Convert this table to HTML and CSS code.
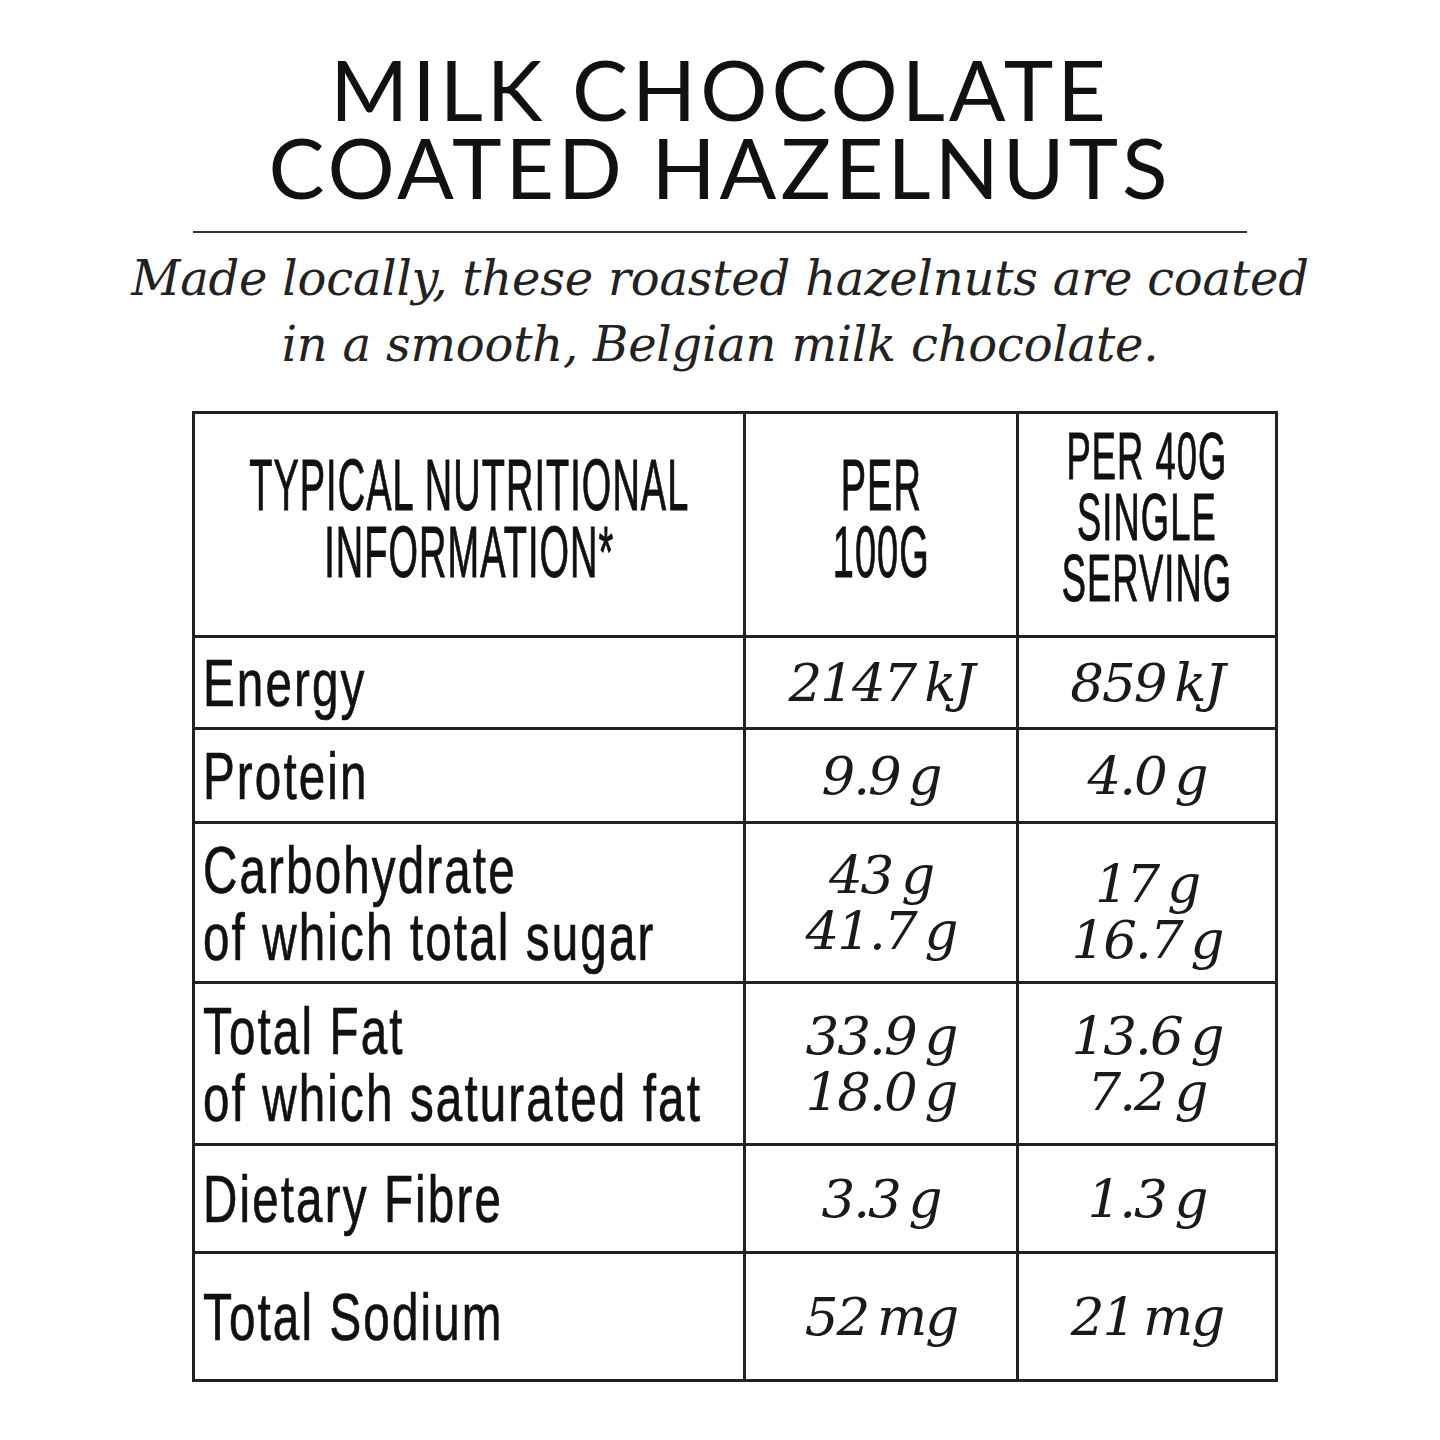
FILE: index.html
```html
<!DOCTYPE html>
<html lang="en">
<head>
<meta charset="utf-8">
<title>Milk Chocolate Coated Hazelnuts</title>
<link rel="stylesheet" href="styles.css">
</head>
<body>
<main class="page">
  <h1 class="title">MILK CHOCOLATE<br>COATED HAZELNUTS</h1>
  <hr class="rule">
  <p class="intro">Made locally, these roasted hazelnuts are coated<br>in a smooth, Belgian milk chocolate.</p>
  <table class="nutrition">
    <colgroup><col class="c1"><col class="c2"><col class="c3"></colgroup>
    <thead>
      <tr class="r-head">
        <th class="head"><div class="head-wrap"><span class="cond-head">TYPICAL NUTRITIONAL<br>INFORMATION*</span></div></th>
        <th class="head"><div class="head-wrap"><span class="cond-head">PER<br>100G</span></div></th>
        <th class="head"><div class="head-wrap"><span class="cond-head small">PER 40G<br>SINGLE<br>SERVING</span></div></th>
      </tr>
    </thead>
    <tbody>
      <tr class="r-energy">
        <td class="label"><span class="cond">Energy</span></td>
        <td class="val">2147 kJ</td>
        <td class="val">859 kJ</td>
      </tr>
      <tr class="r-protein">
        <td class="label"><span class="cond">Protein</span></td>
        <td class="val">9.9 g</td>
        <td class="val">4.0 g</td>
      </tr>
      <tr class="r-carb">
        <td class="label"><span class="cond">Carbohydrate</span><span class="cond">of which total sugar</span></td>
        <td class="val">43 g<br>41.7 g</td>
        <td class="val shift">17 g<br>16.7 g</td>
      </tr>
      <tr class="r-fat">
        <td class="label"><span class="cond">Total Fat</span><span class="cond">of which saturated fat</span></td>
        <td class="val">33.9 g<br>18.0 g</td>
        <td class="val">13.6 g<br>7.2 g</td>
      </tr>
      <tr class="r-fibre">
        <td class="label"><span class="cond">Dietary Fibre</span></td>
        <td class="val">3.3 g</td>
        <td class="val">1.3 g</td>
      </tr>
      <tr class="r-sodium">
        <td class="label"><span class="cond">Total Sodium</span></td>
        <td class="val">52 mg</td>
        <td class="val">21 mg</td>
      </tr>
    </tbody>
  </table>
</main>
</body>
</html>
```

FILE: styles.css
```css
html, body {
  margin: 0;
  padding: 0;
  background: #ffffff;
}

.page {
  width: 1440px;
  padding-top: 50px;
  color: #111111;
}

.title {
  margin: 0;
  font-family: Lato, "Liberation Sans", sans-serif;
  font-weight: 400;
  font-size: 84px;
  line-height: 78px;
  letter-spacing: 4px;
  text-align: center;
  color: #111111;
}

.rule {
  width: 1054px;
  height: 2px;
  margin: 25px auto 0;
  border: 0;
  background: #333333;
}

.intro {
  margin: 12px 0 0;
  font-family: "DejaVu Serif", "Liberation Serif", serif;
  font-style: italic;
  font-size: 48px;
  line-height: 66px;
  letter-spacing: -0.2px;
  text-align: center;
  color: #222222;
}

.nutrition {
  margin: 34px 0 0 192px;
  width: 1083px;
  border-collapse: collapse;
  table-layout: fixed;
  border: 3px solid #222222;
}

.c1 { width: 551px; }
.c2 { width: 273px; }
.c3 { width: 259px; }

.nutrition th,
.nutrition td {
  border: 3px solid #222222;
  padding: 0;
  vertical-align: middle;
}

.r-head { height: 224px; }
.r-energy { height: 92px; }
.r-protein { height: 94px; }
.r-carb { height: 160px; }
.r-fat { height: 162px; }
.r-fibre { height: 108px; }
.r-sodium { height: 128px; }

.nutrition .head {
  padding-bottom: 14px;
  font-family: "Liberation Sans", Arial, sans-serif;
  font-weight: 400;
  color: #111111;
}

.head-wrap {
  display: flex;
  justify-content: center;
}

.cond-head {
  flex: none;
  display: block;
  white-space: nowrap;
  text-align: center;
  font-size: 73px;
  line-height: 67px;
  letter-spacing: 2px;
  transform: scaleX(0.52);
  transform-origin: center center;
  -webkit-text-stroke: 1px #111111;
}

.cond-head.small {
  font-size: 66px;
  line-height: 61px;
  transform: scaleX(0.55);
}

.nutrition .label {
  padding-left: 8px;
  font-family: "Liberation Sans", Arial, sans-serif;
  font-size: 67px;
  line-height: 67px;
  color: #111111;
}

.cond {
  display: block;
  white-space: nowrap;
  letter-spacing: 3px;
  transform: scaleX(0.71);
  transform-origin: left center;
  -webkit-text-stroke: 0.7px #111111;
}

.val {
  font-family: "DejaVu Serif", "Liberation Serif", serif;
  font-style: italic;
  font-size: 53px;
  line-height: 56px;
  letter-spacing: -2px;
  word-spacing: -6px;
  text-align: center;
  color: #1a1a1a;
}

.val.shift {
  padding-top: 18px;
}
```
